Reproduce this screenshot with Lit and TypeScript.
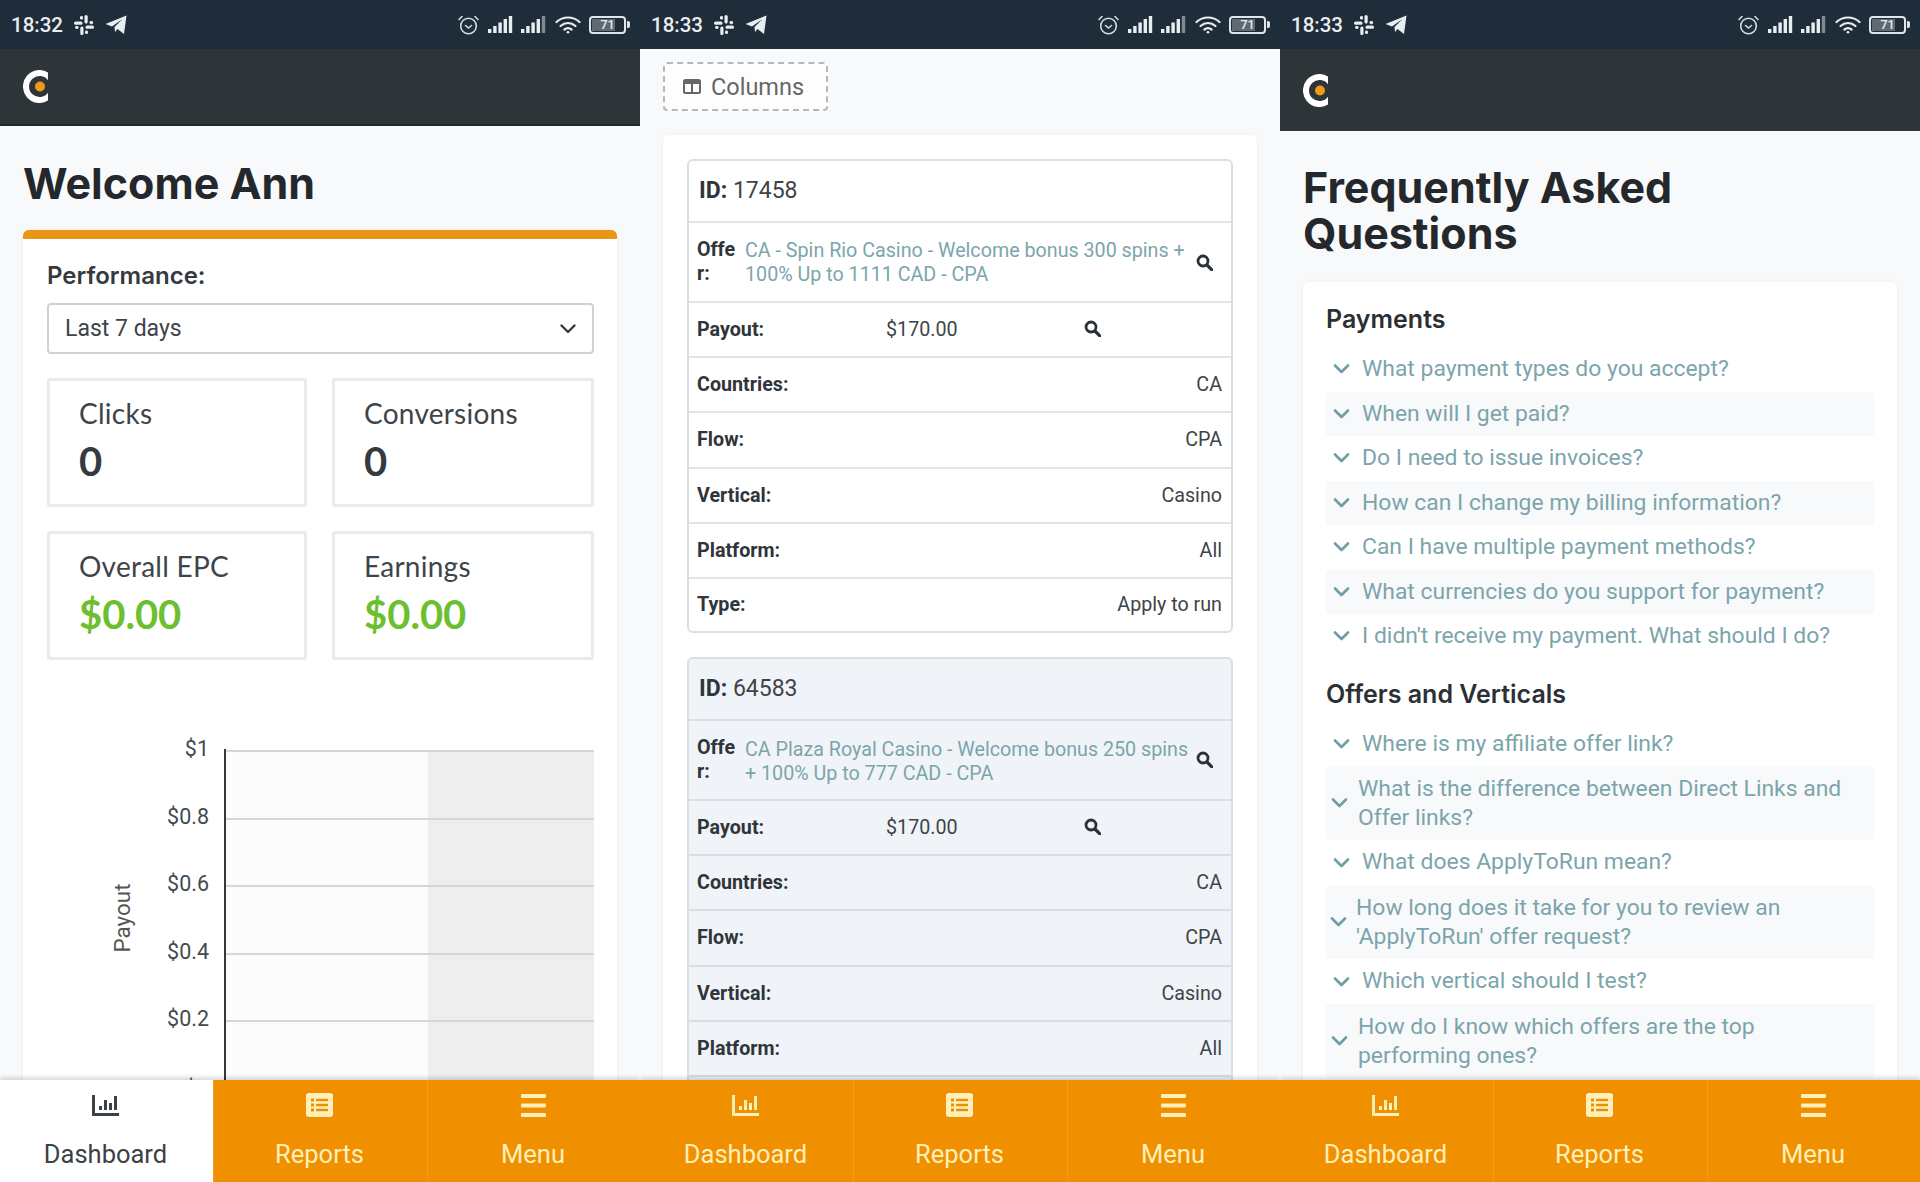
import { LitElement, html, css, svg } from "lit";
import { customElement } from "lit/decorators.js";

const logo = html`<svg class="logo" width="26" height="33" viewBox="0 0 26 33">
  <path d="M25 2.400 L25 10.300 A10.500 10.500 0 1 0 25 22.700 L25 30.600 A16.500 16.500 0 1 1 25 2.400 Z" fill="#fff"/>
  <circle cx="17" cy="16.500" r="5" fill="#ee9a1a"/></svg>`;

const slack = html`<svg width="20" height="20" viewBox="0 0 20 20" fill="#e8edf0">
  <rect x="0" y="6.500" width="8.500" height="3.200" rx="1.500"/><rect x="6" y="1" width="3" height="3.600" rx="1.400"/>
  <rect x="10.500" y="0" width="3.200" height="8.500" rx="1.500"/><rect x="15.500" y="6" width="3.600" height="3.200" rx="1.400"/>
  <rect x="11.500" y="10.500" width="8.500" height="3.200" rx="1.500"/><rect x="11" y="15.500" width="3" height="3.600" rx="1.400"/>
  <rect x="6.300" y="11.500" width="3.200" height="8.500" rx="1.500"/><rect x="1" y="11" width="3.600" height="3" rx="1.400"/></svg>`;

const plane = html`<svg width="22" height="19" viewBox="0 0 22 19"><path fill="#e8edf0" d="M0.500 9 L21.500 0.500 L19 19 L12.500 14 L10 17 L9.500 12 L17.500 4 L7 11.500 Z"/></svg>`;

const alarm = html`<svg width="21" height="20" viewBox="0 0 21 20" fill="none" stroke="#d5dde2" stroke-width="1.600">
  <circle cx="10.500" cy="11" r="7.800"/><path d="M7.500 10.500l3 2.500 3-2.500M1 4.500 4 1.500M20 4.500l-3-3" stroke-linecap="round"/></svg>`;

const signal = (last: string) => html`<svg width="25" height="17" viewBox="0 0 25 17">
  <rect x="0" y="13" width="3.400" height="4" fill="#e8edf0"/><rect x="5.200" y="10" width="3.400" height="7" fill="#e8edf0"/>
  <rect x="10.400" y="6.500" width="3.400" height="10.500" fill="#e8edf0"/><rect x="15.600" y="3" width="3.400" height="14" fill="#e8edf0"/>
  <rect x="20.800" y="0" width="3.400" height="17" fill="${last}"/></svg>`;

const wifi = html`<svg width="26" height="18" viewBox="0 0 26 18" fill="none" stroke="#e8edf0" stroke-width="2.200" stroke-linecap="round">
  <path d="M1.500 6 C8 0 18 0 24.500 6M5.500 10 C10 6 16 6 20.500 10M9.500 13.500 C11.500 12 14.500 12 16.500 13.500"/><circle cx="13" cy="16.300" r="1.300" fill="#e8edf0" stroke="none"/></svg>`;

const battery = html`<span class="batt"><span class="batt-body"><span class="batt-fill"></span><span class="batt-num">71</span></span><span class="batt-tip"></span></span>`;

const searchIcon = html`<svg class="search" width="17" height="17" viewBox="0 0 17 17" fill="none" stroke="#2b3238">
  <circle cx="7" cy="7" r="5" stroke-width="2.800"/><path d="M11 11l4.800 4.800" stroke-width="3.200" stroke-linecap="round"/></svg>`;

const chevron = html`<svg class="chev" width="17" height="10" viewBox="0 0 17 10" fill="none" stroke="#6f9ea6" stroke-width="2.600" stroke-linecap="round" stroke-linejoin="round"><path d="M2 1.500l6.500 6.500 6.500-6.500"/></svg>`;

const barsIcon = html`<svg width="27" height="21" viewBox="0 0 27 21" fill="currentColor">
  <rect x="0" y="0" width="3" height="21"/><rect x="0" y="18" width="27" height="3"/>
  <rect x="7" y="11" width="3" height="4"/><rect x="12" y="5" width="3" height="10"/><rect x="17" y="8" width="3" height="7"/><rect x="22" y="1" width="3" height="14"/></svg>`;

const listIcon = html`<svg width="27" height="24" viewBox="0 0 27 24"><rect width="27" height="24" rx="3" fill="currentColor"/>
  <g fill="#f09000"><rect x="5" y="5.500" width="3" height="3"/><rect x="5" y="10.500" width="3" height="3"/><rect x="5" y="15.500" width="3" height="3"/>
  <rect x="10" y="5.800" width="12" height="2.400"/><rect x="10" y="10.800" width="12" height="2.400"/><rect x="10" y="15.800" width="12" height="2.400"/></g></svg>`;

const menuIcon = html`<svg width="25" height="23" viewBox="0 0 25 23" fill="currentColor"><rect width="25" height="4" rx="1"/><rect y="9.500" width="25" height="4" rx="1"/><rect y="19" width="25" height="4" rx="1"/></svg>`;

const columnsIcon = html`<svg width="18" height="15" viewBox="0 0 18 15" fill="none" stroke="#666"><rect x="1" y="1" width="16" height="13" rx="1.500" stroke-width="2"/><path d="M1 3.500h16" stroke-width="3"/><path d="M9 4v10" stroke-width="2"/></svg>`;

function statusBar(time: string) {
  return html`<div class="status">
    <span class="time">${time}</span><span class="slack">${slack}</span><span class="plane">${plane}</span>
    <span class="status-right">${alarm}${signal("#e8edf0")}${signal("#7f8a92")}${wifi}${battery}</span>
  </div>`;
}

function nav(active: boolean) {
  return html`<nav class="nav">
    <div class="nav-item ${active ? "active" : ""}"><span class="nav-ic">${barsIcon}</span><span>Dashboard</span></div>
    <div class="nav-item"><span class="nav-ic">${listIcon}</span><span>Reports</span></div>
    <div class="nav-item"><span class="nav-ic">${menuIcon}</span><span>Menu</span></div>
  </nav>`;
}

const chart = html`<svg class="chart" width="547" height="400" viewBox="0 0 547 400">
  <rect x="178" y="31" width="204" height="369" fill="#fcfcfc"/>
  <rect x="381" y="31" width="166" height="369" fill="#eeeeee"/>
  ${[31, 99, 166, 234, 301, 369].map(
    (y) => svg`<rect x="178" y="${y - 1}" width="369" height="2" fill="#d6d6d6"/>`
  )}
  <rect x="177" y="29" width="2" height="371" fill="#33383c"/>
  ${[
    ["$1", 36],
    ["$0.8", 104],
    ["$0.6", 171],
    ["$0.4", 239],
    ["$0.2", 306],
    ["$0", 376],
  ].map(([t, y]) => svg`<text x="162" y="${y}" text-anchor="end" class="tick">${t}</text>`)}
  <text class="ylab" transform="translate(83 198) rotate(-90)" text-anchor="middle">Payout</text>
</svg>`;

function offerTable(id: string, offer: string, alt: boolean) {
  const rows = [
    ["Countries:", "CA"],
    ["Flow:", "CPA"],
    ["Vertical:", "Casino"],
    ["Platform:", "All"],
    ["Type:", "Apply to run"],
  ];
  return html`<div class="tbl ${alt ? "alt" : ""}">
    <div class="row id-row"><b>ID:</b>&nbsp;${id}</div>
    <div class="row offer-row">
      <b class="offer-lab">Offer:</b><a class="offer-link">${offer}</a>${searchIcon}
    </div>
    <div class="row payout-row"><b>Payout:</b><span>$170.00</span>${searchIcon}</div>
    ${rows.map(([a, b]) => html`<div class="row kv"><b>${a}</b><span>${b}</span></div>`)}
  </div>`;
}

type Q = { t: string; v?: "" | "a" | "b" };
const pay: Q[] = [
  { t: "What payment types do you accept?" },
  { t: "When will I get paid?" },
  { t: "Do I need to issue invoices?" },
  { t: "How can I change my billing information?" },
  { t: "Can I have multiple payment methods?" },
  { t: "What currencies do you support for payment?" },
  { t: "I didn't receive my payment. What should I do?" },
];
const off: Q[] = [
  { t: "Where is my affiliate offer link?" },
  { t: "What is the difference between Direct Links and Offer links?", v: "a" },
  { t: "What does ApplyToRun mean?" },
  { t: "How long does it take for you to review an 'ApplyToRun' offer request?", v: "b" },
  { t: "Which vertical should I test?" },
  { t: "How do I know which offers are the top performing ones?", v: "a" },
];
const faqList = (qs: Q[]) =>
  qs.map(
    (q) => html`<div class="q ${q.v ?? ""}">${chevron}<span>${q.t}</span></div>`
  );

@customElement("app-root")
export class AppRoot extends LitElement {
  static styles = css`
    :host { display: block; width: 1920px; height: 1182px; overflow: hidden; font-family: Roboto, sans-serif; color: #343a40; }
    .page { display: grid; grid-template-columns: repeat(3, 640px); height: 1182px; }
    .panel { display: flex; flex-direction: column; height: 1182px; background: #f8f9fa; overflow: hidden; min-width: 0; }
    .status { height: 49px; flex: none; background: #1f2d3a; display: flex; align-items: center; padding: 0 10px 0 11px; box-sizing: border-box; color: #e8edf0; }
    .time { font-size: 20.500px; font-weight: 500; width: 52px; }
    .slack { display: flex; margin-left: 11px; }
    .plane { display: flex; margin-left: 11px; }
    .status-right { margin-left: auto; display: flex; align-items: center; gap: 8.500px; }
    .batt { display: flex; align-items: center; gap: 1px; }
    .batt-body { position: relative; width: 37px; height: 18px; border: 2px solid #dfe5e8; border-radius: 4px; box-sizing: border-box; display: flex; align-items: center; justify-content: center; overflow: hidden; }
    .batt-fill { position: absolute; left: 1px; top: 1px; bottom: 1px; width: 70%; background: #5f6a72; }
    .batt-num { position: relative; font-size: 12.500px; font-weight: 500; color: #e8edf0; }
    .batt-tip { width: 3px; height: 7px; background: #dfe5e8; border-radius: 0 2px 2px 0; }

    .header { flex: none; background: #2d3538; display: flex; align-items: center; padding-left: 23px; box-sizing: border-box; }
    .header.h1 { height: 77px; border-bottom: 2px solid #23292c; }
    .header.h3 { height: 82px; }
    .logo { display: block; }

    .content { flex: 1; min-height: 0; overflow: hidden; }
    .h-title { font-family: Inter, sans-serif; font-weight: 700; font-size: 43px; line-height: 46px; color: #24282c; margin: 0; }
    .card { background: #fff; border-radius: 6px; box-shadow: 0 0 4px rgba(0,0,0,.05); }

    /* dashboard */
    .dash { padding: 34px 23px 0; }
    .dash .card { margin-top: 24px; border-top: 9px solid #ea9516; padding: 21px 23px 0 24px; min-height: 900px; box-sizing: border-box; }
    .perf { font-family: Inter, sans-serif; font-size: 24px; font-weight: 600; line-height: 31px; color: #343a40; }
    .select { margin-top: 12px; height: 51px; border: 2px solid #cfd2d4; border-radius: 4px; box-sizing: border-box; display: flex; align-items: center; justify-content: space-between; padding: 0 16px 0 16px; font-size: 23px; color: #3e4449; }
    .stats { margin-top: 24px; display: grid; grid-template-columns: 260px 262px; column-gap: 25px; row-gap: 24px; }
    .stat { height: 129px; box-sizing: border-box; border: 3px solid #e8eaec; border-radius: 3px; padding: 15px 0 0 29px; }
    .stat-l { font-family: Lato, sans-serif; font-size: 28px; line-height: 34px; color: #3e4449; letter-spacing: .25px; }
    .stat-v { font-family: Lato, sans-serif; font-size: 40px; font-weight: 700; line-height: 46px; margin-top: 8px; color: #343a40; }
    .stat-v.g { color: #6cbf2e; }
    .chart { display: block; margin-top: 60px; }
    .tick { font-family: Roboto, sans-serif; font-size: 21.500px; fill: #444a4f; }
    .ylab { font-family: Roboto, sans-serif; font-size: 22.500px; fill: #555; }

    /* offers */
    .offers { padding: 13px 23px 0; }
    .cols { width: 165px; height: 49px; box-sizing: border-box; border: 2px dashed #b5b8ba; border-radius: 4px; display: flex; align-items: center; gap: 10px; padding-left: 18px; font-size: 23.500px; color: #666; background: #fdfdfd; }
    .cols svg { display: block; }
    .offers .card { margin-top: 24px; padding: 24px 24px 0 24px; min-height: 1000px; box-sizing: border-box; }
    .tbl { border: 2px solid #dcdfe1; border-radius: 6px; margin-bottom: 24px; width: 546px; box-sizing: border-box; background: #fff; }
    .tbl.alt { background: #f0f4f8; }
    .row { display: flex; align-items: center; box-sizing: border-box; height: 55.200px; padding: 0 9px 0 8px; border-bottom: 2px solid #e2e5e7; font-size: 19.700px; color: #3e4449; }
    .tbl.alt .row { border-bottom-color: #d9dee2; }
    .row:last-child { border-bottom: none; height: 52px; }
    .row b { font-weight: 700; color: #2f353a; }
    .id-row { height: 62px; font-size: 23px; padding-left: 10px; padding-bottom: 2px; }
    .tbl.alt .id-row { padding-bottom: 0; }
    .offer-row { height: 80px; line-height: 24px; }
    .offer-lab { width: 46px; flex: none; word-break: break-all; }
    .offer-link { width: 448px; flex: none; margin-left: 2px; color: #7ba5ab; padding-top: 2px; }
    .tbl.alt .offer-link { padding-top: 4px; }
    .offer-row .search { margin-left: 3px; }
    .payout-row > b { width: 189px; flex: none; }
    .payout-row > span { width: 198px; flex: none; }
    .payout-row .search { margin-top: -2px; }
    .kv { justify-content: space-between; }

    /* faq */
    .faq { padding: 33px 23px 0; }
    .faq .card { margin-top: 26px; padding: 18px 23px 0; min-height: 900px; box-sizing: border-box; }
    .sec { font-family: Inter, sans-serif; font-size: 25px; font-weight: 600; line-height: 38px; color: #2b3035; }
    .sec.s2 { margin-top: 16px; }
    .qs { margin-top: 9px; }
    .q { display: flex; align-items: center; gap: 12px; padding: 8px 10px 8px 7px; line-height: 28.500px; font-size: 22.900px; color: #7ba5ab; border-radius: 4px; }
    .q:nth-child(even) { background: #f8f9fa; }
    .q .chev { flex: none; }
    .q.a { padding-left: 5px; gap: 10px; line-height: 29.200px; }
    .q.b { padding-left: 4px; gap: 9px; line-height: 29.200px; }

    /* nav */
    .nav { flex: none; height: 102px; display: grid; grid-template-columns: 213px 214px 213px; background: #f09000; box-shadow: 0 -2px 5px rgba(0,0,0,.18); position: relative; }
    .nav-item { display: flex; flex-direction: column; align-items: center; color: #ffefb8; font-size: 25.500px; line-height: 30px; border-left: 1px solid #f39c20; padding-right: 2px; }
    .nav-item:first-child { border-left: none; }
    .nav-item.active { background: #fff; color: #3a4147; }
    .nav-ic { height: 24px; margin-top: 13px; margin-bottom: 22px; display: flex; align-items: center; }
  `;

  render() {
    return html`<div class="page">
      <section class="panel">
        ${statusBar("18:32")}
        <div class="header h1">${logo}</div>
        <div class="content dash">
          <h1 class="h-title">Welcome Ann</h1>
          <div class="card">
            <div class="perf">Performance:</div>
            <div class="select"><span>Last 7 days</span>
              <svg width="16" height="10" viewBox="0 0 16 10" fill="none" stroke="#343a40" stroke-width="2.400" stroke-linecap="round" stroke-linejoin="round"><path d="M1.500 1.500L8 8l6.500-6.500"/></svg>
            </div>
            <div class="stats">
              <div class="stat"><div class="stat-l">Clicks</div><div class="stat-v">0</div></div>
              <div class="stat"><div class="stat-l">Conversions</div><div class="stat-v">0</div></div>
              <div class="stat"><div class="stat-l">Overall EPC</div><div class="stat-v g">$0.00</div></div>
              <div class="stat"><div class="stat-l">Earnings</div><div class="stat-v g">$0.00</div></div>
            </div>
            ${chart}
          </div>
        </div>
        ${nav(true)}
      </section>

      <section class="panel">
        ${statusBar("18:33")}
        <div class="content offers">
          <div class="cols">${columnsIcon}<span>Columns</span></div>
          <div class="card">
            ${offerTable("17458", "CA - Spin Rio Casino - Welcome bonus 300 spins + 100% Up to 1111 CAD - CPA", false)}
            ${offerTable("64583", "CA Plaza Royal Casino - Welcome bonus 250 spins + 100% Up to 777 CAD - CPA", true)}
          </div>
        </div>
        ${nav(false)}
      </section>

      <section class="panel">
        ${statusBar("18:33")}
        <div class="header h3">${logo}</div>
        <div class="content faq">
          <h1 class="h-title">Frequently Asked<br />Questions</h1>
          <div class="card">
            <div class="sec">Payments</div>
            <div class="qs">${faqList(pay)}</div>
            <div class="sec s2">Offers and Verticals</div>
            <div class="qs">${faqList(off)}</div>
          </div>
        </div>
        ${nav(false)}
      </section>
    </div>`;
  }
}
